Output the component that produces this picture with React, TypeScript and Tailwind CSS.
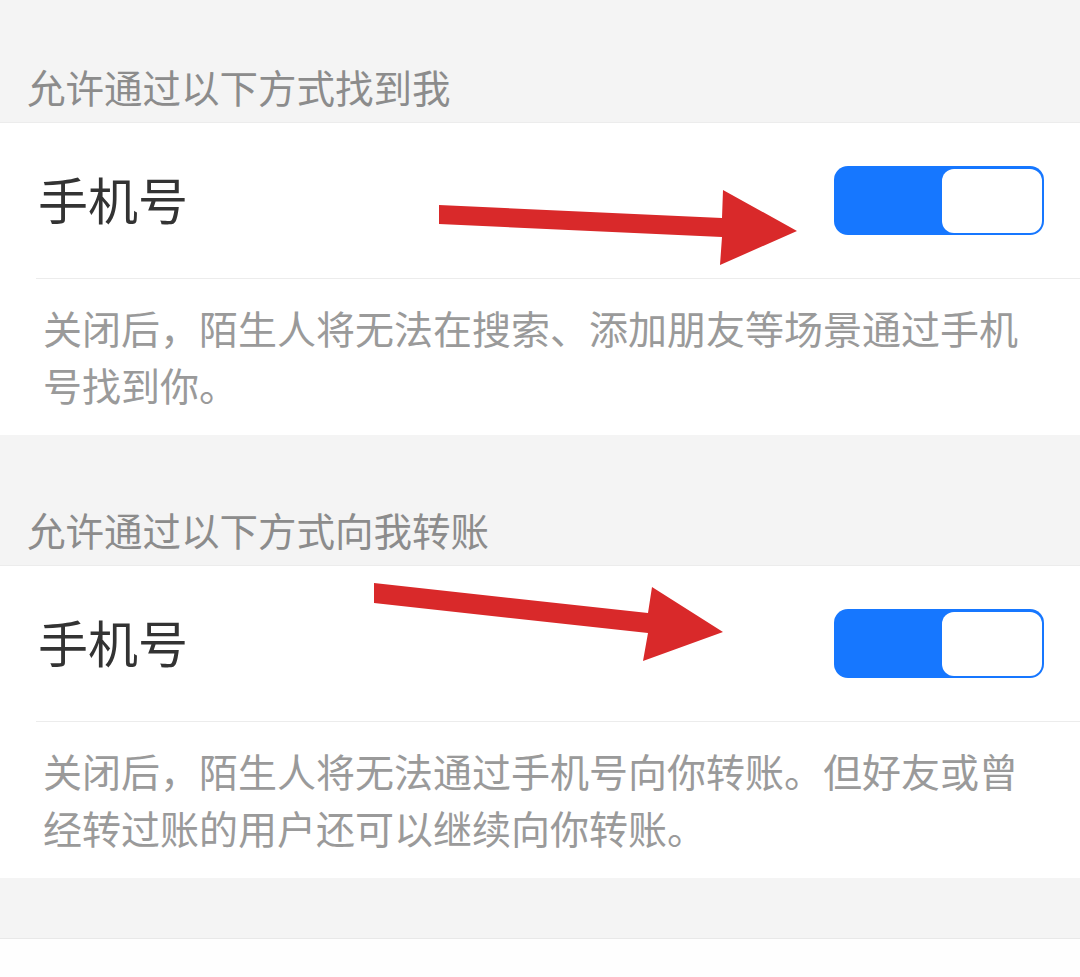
const Toggle = () => (
  <div className="w-[210px] h-[69px] rounded-[14px] bg-[#1677ff] p-[2.5px] flex justify-end">
    <div className="w-[100px] h-full bg-white rounded-[12px]" />
  </div>
);

const Section = ({ title, desc, top }: { title: string; desc: string; top: string }) => (
  <>
    <div className={`${top} flex items-end px-[27px] pb-[12px]`}>
      <span className="text-[38.5px] leading-[48px] text-[#8c8c8c]">{title}</span>
    </div>
    <div className="bg-white border-t border-[#ececec]">
      <div className="h-[155px] flex items-center justify-between pl-[38px] pr-[36px]">
        <span className="text-[50px] leading-none text-[#333333] mb-[6px]">手机号</span>
        <Toggle />
      </div>
      <div className="ml-[36px] border-t border-[#ececec]" />
      <p className="pl-[43px] pr-[40px] pt-[20px] pb-[22px] text-[39px] leading-[57px] text-[#9a9a9a]">
        {desc}
      </p>
    </div>
  </>
);

export default function App() {
  return (
    <div className="relative h-[977px] overflow-hidden bg-[#f4f4f4] font-['Noto_Sans_CJK_SC','Noto_Sans',sans-serif]">
      <Section
        top="h-[122px]"
        title="允许通过以下方式找到我"
        desc="关闭后，陌生人将无法在搜索、添加朋友等场景通过手机号找到你。"
      />
      <Section
        top="h-[130px]"
        title="允许通过以下方式向我转账"
        desc="关闭后，陌生人将无法通过手机号向你转账。但好友或曾经转过账的用户还可以继续向你转账。"
      />
      <div className="h-[60px]" />
      <div className="h-full bg-[#fefefe] border-t border-[#e8e8e8]" />

      <svg
        className="absolute inset-0 pointer-events-none"
        width="1080"
        height="977"
        viewBox="0 0 1080 977"
      >
        <polygon
          fill="#d9292a"
          points="439,205 722,218 723,190 797,231 720,265 722,237 439,224"
        />
        <polygon
          fill="#d9292a"
          points="374,583 648,613 652,587 723,632 643,661 648,633 374,603"
        />
      </svg>
    </div>
  );
}
